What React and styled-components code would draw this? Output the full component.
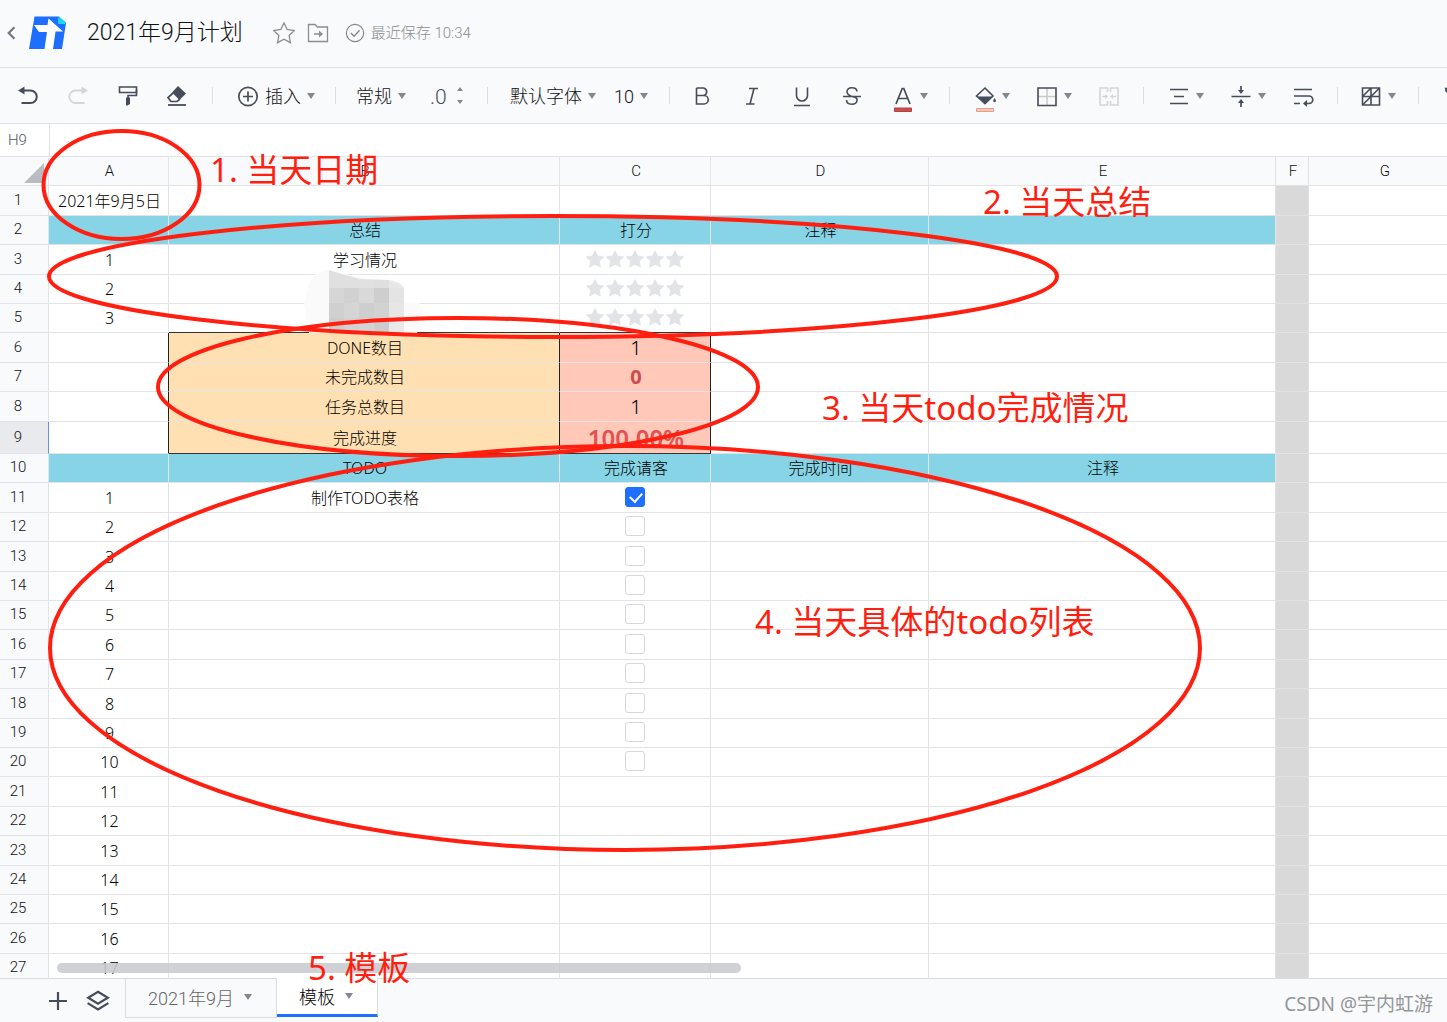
import React, { useState } from 'react'
import styled, { createGlobalStyle, css } from 'styled-components'

const UI_FONT = `Roboto, 'Noto Sans CJK SC', sans-serif`
const CELL_FONT = `'Noto Sans', 'Noto Sans CJK SC', sans-serif`

const INK = '#464d5a'
const LINE = '#e1e3e6'
const PANEL = '#f9fafc'
const RED = '#ff1f10'

const GlobalStyle = createGlobalStyle`
  * {
    box-sizing: border-box;
  }

  body {
    margin: 0;
    overflow: hidden;
    font-family: ${UI_FONT};
    font-weight: 300;
    color: #222;
    background: #fff;
  }

  button,
  input {
    margin: 0;
    padding: 0;
    font: inherit;
    color: inherit;
  }

  svg {
    display: block;
  }
`

// ────────────────────────────────────────────────────────────────────────────────
// 1) Page frame
// ────────────────────────────────────────────────────────────────────────────────
const Page = styled.div`
  position: relative;
  display: flex;
  flex-direction: column;
  height: 100vh;
  overflow: hidden;
`

const TitleBar = styled.header`
  flex: none;
  display: flex;
  align-items: center;
  height: 68px;
  padding: 0 3px 2px;
  background: ${PANEL};
  border-bottom: 1px solid ${LINE};
`

const BackButton = styled.button`
  display: flex;
  border: 0;
  background: none;
  color: #747982;
  cursor: pointer;
`

const Logo = styled.a`
  display: flex;
  margin: 0 20px 0 7px;
`

const Title = styled.h1`
  margin: 0 30px 0 0;
  font-size: 23px;
  font-weight: 300;
  line-height: 32px;
  color: #111;
`

const TitleIcon = styled.button`
  display: flex;
  margin-right: 12px;
  border: 0;
  background: none;
  color: #8a8d94;
  cursor: pointer;
`

const SaveState = styled.span`
  display: flex;
  align-items: center;
  gap: 6px;
  margin-left: 4px;
  color: #85888f;
`

const SaveText = styled.span`
  padding-bottom: 2px;
  font-size: 15px;
  color: #8c8c8c;
`

// ────────────────────────────────────────────────────────────────────────────────
// 2) Toolbar
// ────────────────────────────────────────────────────────────────────────────────
const Toolbar = styled.div`
  flex: none;
  display: flex;
  align-items: center;
  height: 56px;
  padding-left: 16px;
  overflow: hidden;
  background: ${PANEL};
  border-bottom: 1px solid ${LINE};

  svg {
    overflow: visible;
  }
`

const Tool = styled.button`
  flex: none;
  display: flex;
  align-items: center;
  justify-content: ${({ $pad }) => ($pad ? 'flex-start' : 'center')};
  gap: 6px;
  width: ${({ $width }) => $width || 50}px;
  height: 32px;
  padding-left: ${({ $pad }) => $pad || 0}px;
  border: 0;
  background: none;
  color: ${({ disabled }) => (disabled ? '#d3d5d9' : INK)};
  font-size: 18px;
  line-height: 32px;
  white-space: nowrap;
  cursor: pointer;
`

const ToolLabel = styled.span`
  padding-top: 2px;
  color: #111;
`

const Decimals = styled.span`
  margin-right: 4px;
  padding-top: 2px;
  font-size: 21px;
`

const Divider = styled.span`
  flex: none;
  width: 1px;
  height: 17px;
  margin-right: ${({ $after }) => $after || 0}px;
  background: #dcdee2;
`

const Caret = styled.span`
  flex: none;
  border: 4px solid transparent;
  border-top: 6px solid #83878f;
  border-bottom: 0;
`

const Stepper = styled.span`
  display: flex;
  flex-direction: column;
  gap: 9px;

  &::before,
  &::after {
    content: '';
    border: 3px solid transparent;
  }
  &::before {
    border-top: 0;
    border-bottom: 4px solid #83878f;
  }
  &::after {
    border-bottom: 0;
    border-top: 4px solid #83878f;
  }
`

// ────────────────────────────────────────────────────────────────────────────────
// 3) Name box and grid
// ────────────────────────────────────────────────────────────────────────────────
const FormulaBar = styled.div`
  flex: none;
  display: flex;
  height: 32px;
`

const NameBox = styled.input`
  width: 50px;
  padding-left: 8px;
  border: 0;
  border-right: 1px solid ${LINE};
  outline: 0;
  font-size: 15px;
  color: #555;
`

const FormulaInput = styled.input`
  flex: 1;
  border: 0;
  outline: 0;
`

const Sheet = styled.main`
  position: relative;
  flex: 1;
  min-height: 0;
  overflow: hidden;
`

const Grid = styled.table`
  width: max(100%, 1460px);
  table-layout: fixed;
  border-collapse: separate;
  border-spacing: 0;

  thead tr {
    height: 30px;
  }
  tbody tr {
    height: 29px;
  }
  tbody tr:nth-child(5n + 1),
  tbody tr:nth-child(5n + 3) {
    height: 30px;
  }
  tbody tr:nth-child(9) {
    height: 32px;
  }
`

const Col = styled.col`
  width: ${({ $width }) => ($width ? `${$width}px` : 'auto')};
`

const headCell = css`
  padding: 0 0 0 2px;
  background: ${PANEL};
  border-right: 1px solid ${LINE};
  border-bottom: 1px solid ${LINE};
  font-size: 15px;
  font-weight: 300;
  line-height: 18px;
  color: #111;
`

const ColumnHead = styled.th`
  ${headCell}
  border-top: 1px solid ${LINE};
`

const Corner = styled(ColumnHead)`
  svg {
    margin: 4px 4px 0 auto;
  }
`

const RowHead = styled.th`
  ${headCell}
  padding: 0 12px 2px 0;
  ${({ $active }) =>
    $active &&
    css`
      background: #e8eaed;
      border-right-color: #5c94f8;
    `}
`

const FILLS = {
  blue: '#86d4e5',
  orange: '#ffe0b2',
  pink: '#ffc8b9',
  gray: '#d9d9d9',
}

const Cell = styled.td`
  padding: 0 0 0 2px;
  background: ${({ $fill }) => FILLS[$fill] || '#fff'};
  border-right: 1px solid ${({ $edgeRight }) => ($edgeRight ? '#222' : LINE)};
  border-bottom: 1px solid ${({ $edgeBottom }) => ($edgeBottom ? '#333' : LINE)};
  font-family: ${CELL_FONT};
  font-size: 16px;
  line-height: 24px;
  text-align: center;
  color: #000;
`

const Count = styled.span`
  display: block;
  font-size: 20px;
  line-height: 28px;
`

const Alert = styled(Count)`
  font-weight: 700;
  color: #cb4d4f;
`

const Percent = styled(Count)`
  font-size: 24px;
  font-weight: 600;
  color: #e4504f;
`

const Stars = styled.span`
  display: flex;
  justify-content: center;
  padding: 0 2px 2px 0;
`

const StarButton = styled.button`
  display: flex;
  justify-content: center;
  width: 20px;
  border: 0;
  background: none;
  color: #e1e3e6;
  cursor: pointer;
`

const CheckBox = styled.span`
  display: flex;
  justify-content: center;
  padding: 0 2px 2px 0;
`

const Check = styled.input`
  appearance: none;
  position: relative;
  width: 20px;
  height: 20px;
  border: 1px solid #d5d7da;
  border-radius: 3px;
  background: #fff;

  &:checked {
    border-color: #1e6fff;
    background: #1e6fff;
  }
  &:checked::after {
    content: '';
    position: absolute;
    left: 6px;
    top: 2px;
    width: 6px;
    height: 10px;
    border: solid #fff;
    border-width: 0 2px 2px 0;
    transform: rotate(42deg);
  }
`

const ScrollThumb = styled.div`
  position: absolute;
  left: 57px;
  bottom: 5px;
  width: 684px;
  height: 10px;
  border-radius: 5px;
  background: rgba(202, 203, 208, 0.88);
`

// ────────────────────────────────────────────────────────────────────────────────
// 4) Sheet tabs
// ────────────────────────────────────────────────────────────────────────────────
const TabBar = styled.footer`
  flex: none;
  display: flex;
  align-items: flex-start;
  height: 44px;
  background: ${PANEL};
  border-top: 1px solid #d9dce0;
`

const TabTools = styled.div`
  display: flex;
  align-items: center;
  gap: 17px;
  width: 125px;
  height: 44px;
  padding-left: 47px;
`

const TabTool = styled.button`
  display: flex;
  border: 0;
  background: none;
  color: ${INK};
  cursor: pointer;
`

const Tab = styled.button`
  display: flex;
  align-items: center;
  gap: 10px;
  height: 39px;
  padding: 0 24px 2px 22px;
  border: 1px solid #d9dce0;
  border-top: 0;
  background: ${PANEL};
  font-size: 18px;
  color: #666;
  cursor: pointer;

  ${({ $active }) =>
    $active &&
    css`
      margin-top: -1px;
      padding-bottom: 0;
      border-left: 0;
      border-bottom: 3px solid #1e6fff;
      background: #fff;
      color: #000;
    `}
`

// ────────────────────────────────────────────────────────────────────────────────
// 5) Hand-drawn notes over the sheet
// ────────────────────────────────────────────────────────────────────────────────
const Markup = styled.svg`
  position: absolute;
  left: 0;
  top: 0;
  pointer-events: none;
`

const Note = styled.span`
  position: absolute;
  left: ${({ $x }) => $x}px;
  top: ${({ $y }) => $y}px;
  font-family: ${CELL_FONT};
  font-size: 33px;
  font-weight: 400;
  line-height: 40px;
  white-space: nowrap;
  color: ${RED};
  pointer-events: none;
`

const Watermark = styled.span`
  position: absolute;
  right: 14px;
  bottom: 4px;
  font-family: ${CELL_FONT};
  font-size: 19px;
  font-weight: 400;
  line-height: 28px;
  color: #95979a;
`

// ────────────────────────────────────────────────────────────────────────────────
// Icons
// ────────────────────────────────────────────────────────────────────────────────
const Icon = ({ size = 22, children }) => (
  <svg
    width={size}
    height={size}
    viewBox="0 0 22 22"
    fill="none"
    stroke="currentColor"
    strokeWidth="1.6"
    aria-hidden="true"
  >
    {children}
  </svg>
)

const LogoIcon = () => (
  <svg width="39" height="34" viewBox="0 0 39 34" aria-hidden="true">
    <path d="M6.500 0.500H31L38 7L34 33H1Z" fill="#1e6fff" />
    <path d="M30.500 0.500L38 6.500L37.500 8H31.500Q29.500 8 30 5.500Z" fill="#15d8f2" />
    <path d="M20.500 2.500L35 15.500H27.500L25 33H16.500L19 16H11L6 9H19.500Z" fill="#fff" />
  </svg>
)

const STAR = 'M11 1.800L13.900 7.800L20.500 8.700L15.700 13.300L16.900 19.900L11 16.700L5.100 19.900L6.300 13.300L1.500 8.700L8.100 7.800Z'

const icons = {
  back: <path d="M14 4L7 11L14 18" strokeWidth="2.800" />,
  star: <path d={STAR} transform="translate(-1 -1) scale(1.09)" strokeWidth="1.200" />,
  folder: (
    <>
      <path d="M1.500 2.500H8L10.500 5H20.500V19.500H1.500Z" strokeWidth="1.300" />
      <path d="M7 12H14" strokeWidth="1.500" />
      <path d="M12 8.500L16 12L12 15.500Z" fill="currentColor" stroke="none" />
    </>
  ),
  saved: (
    <>
      <circle cx="11" cy="11" r="9.500" strokeWidth="1.300" />
      <path d="M6.500 11L10 14.500L16 8" strokeWidth="1.500" />
    </>
  ),
  undo: (
    <>
      <path d="M4 5.500H13.500A6 6 0 0 1 13.500 18H4.500" strokeWidth="2" />
      <path d="M1 5.500L7.500 1.500V9.500Z" fill="currentColor" stroke="none" />
    </>
  ),
  redo: (
    <>
      <path d="M18 5.500H8.500A6 6 0 0 0 8.500 18H17.500" strokeWidth="1.800" />
      <path d="M21 5.500L14.500 1.500V9.500Z" fill="currentColor" stroke="none" />
    </>
  ),
  painter: (
    <>
      <path d="M2.500 2H19.500V7.500H2.500Z" />
      <path d="M19.500 4.500V10.500H11V13" />
      <path d="M9 12.500H13V19L10.500 20.500H9Z" fill="currentColor" stroke="none" />
    </>
  ),
  eraser: (
    <>
      <path d="M13 1L21 8.500L14.500 15L7 7.500Z" fill="currentColor" stroke="none" />
      <path d="M8 8L3 12.500L6 16.500H12L15 14" strokeWidth="1.700" />
      <path d="M3 20H21" strokeWidth="1.800" />
    </>
  ),
  plusCircle: (
    <>
      <circle cx="11" cy="11.500" r="9.200" strokeWidth="1.700" />
      <path d="M11 6.500V16.500M6 11.500H16" strokeWidth="1.700" />
    </>
  ),
  bold: <path d="M5.500 3H12.500A3.800 3.800 0 0 1 12.500 10.500H5.500M12.500 10.500H13A4.200 4.200 0 0 1 13 19H5.500V3" strokeWidth="1.600" />,
  italic: <path d="M8 3.500H17M5 19H13.500M13 3.500L9 19" strokeWidth="1.600" />,
  underline: <path d="M5.500 2.500V10.500A5.500 5.500 0 0 0 16.500 10.500V2.500M3 20.500H19" strokeWidth="1.600" />,
  strike: (
    <path
      d="M16 6.500C15.500 1.500 5.500 1.500 6 7C6.200 9.500 9 10.800 11 11.500M11 11.500C14.500 12 16.500 13 16 15.500C15.500 20.500 5.500 20.500 5.500 15M2 11.500H20"
      strokeWidth="1.600"
    />
  ),
  fontColor: (
    <>
      <path d="M4 19L10.200 3.500H11.800L18 19M6.500 13.500H15.500" strokeWidth="1.700" />
      <path d="M2.500 23H19.500V26.500H2.500Z" fill="#c9504f" stroke="#b44545" strokeWidth="1" />
    </>
  ),
  fill: (
    <>
      <path d="M11 3L19 11L11 18.500L2.500 11Z" />
      <path d="M3 11.500H19L11 19.500Z" fill="currentColor" stroke="none" />
      <path d="M20.500 13Q23.500 17 20.500 17.200Q17.800 17 20.500 13Z" fill="currentColor" stroke="none" />
      <path d="M2.500 23.500H19.500V26.500H2.500Z" fill="#fcc5b5" stroke="#dda292" strokeWidth="1" />
    </>
  ),
  borders: (
    <>
      <path d="M11 3V20M2 11.500H20" stroke="#c7c9cd" strokeWidth="1.500" />
      <path d="M2 3H20V20.500H2Z" strokeWidth="1.600" />
    </>
  ),
  merge: (
    <>
      <path d="M9.500 7V3H2V20H9.500V16M12.500 7V3H20V20H12.500V16" />
      <path d="M4 11.500H8M18 11.500H14" />
      <path d="M7 9L10 11.500L7 14ZM15 9L12 11.500L15 14Z" fill="currentColor" stroke="none" />
    </>
  ),
  align: <path d="M2 4.500H20M6 11.500H16M2 18.500H20" strokeWidth="1.700" />,
  valign: (
    <>
      <path d="M1.500 11.500H20.500M11 1V6M11 22V17" strokeWidth="1.700" />
      <path d="M8 5H14L11 9ZM8 18H14L11 14Z" fill="currentColor" stroke="none" />
    </>
  ),
  wrap: (
    <>
      <path d="M2 4.500H20M2 11H17A3.600 3.600 0 0 1 17 18.500H14M2 18.500H8" strokeWidth="1.700" />
      <path d="M11 18.500L15 15V22Z" fill="currentColor" stroke="none" />
    </>
  ),
  format: <path d="M2.500 3H19.500V20H2.500ZM11 3V20M2.500 11.500H19.500M2.500 20L19.500 3M2.500 11.500L11 3" />,
  filter: <path d="M3 3.500H20L13 11.500V19.500L10 18V11.500ZM3 3.500V6L10 12" />,
  plus: <path d="M11 2V20M2 11H20" strokeWidth="2.200" />,
  layers: <path d="M11 2.500L20 8L11 13.500L2 8ZM1.500 13L11 18.800L20.500 13" strokeWidth="2" />,
}

// ────────────────────────────────────────────────────────────────────────────────
// Sheet data
// ────────────────────────────────────────────────────────────────────────────────
const columns = [
  { name: 'A', width: 120 },
  { name: 'B', width: 391 },
  { name: 'C', width: 151 },
  { name: 'D', width: 218 },
  { name: 'E', width: 347 },
  { name: 'F', width: 33 },
  { name: 'G' },
]

const summary = {
  1: { A: '2021年9月5日' },
  2: { B: '总结', C: '打分', D: '注释' },
  3: { A: '1', B: '学习情况' },
  4: { A: '2' },
  5: { A: '3' },
  6: { B: 'DONE数目', C: <Count>1</Count> },
  7: { B: '未完成数目', C: <Alert>0</Alert> },
  8: { B: '任务总数目', C: <Count>1</Count> },
  9: { B: '完成进度', C: <Percent>100.00%</Percent> },
  10: { B: 'TODO', C: '完成请客', D: '完成时间', E: '注释' },
  11: { B: '制作TODO表格' },
}

const rows = Array.from({ length: 27 }, (_, i) => i + 1)

const inBox = (row) => row >= 6 && row <= 9

const fillOf = (row, col) => {
  if (col === 'F') return 'gray'
  if (col === 'G') return undefined
  if (row === 2 || row === 10) return 'blue'
  if (inBox(row) && col === 'B') return 'orange'
  if (inBox(row) && col === 'C') return 'pink'
  return undefined
}

// Blurred-out patch in rows 4 and 5: [x, y, grey] of each 15px tile
const tiles = [
  [329, 270, '#e0e0e0'], [344, 270, '#e0e0e0'], [359, 270, '#e1e1e1'], [374, 270, '#dfdfdf'], [389, 270, '#e8e8e8'],
  [329, 288, '#d6d6d6'], [344, 288, '#d1d1d1'], [359, 288, '#d9d9d9'], [374, 288, '#cecece'], [389, 288, '#e4e4e4'],
  [329, 303, '#d0d0d0'], [344, 303, '#d5d5d5'], [359, 303, '#cecece'], [374, 303, '#d2d2d2'], [389, 303, '#e6e6e6'],
  [329, 318, '#cbcbcb'], [344, 318, '#d0d0d0'], [359, 318, '#d3d3d3'], [374, 318, '#cccccc'], [389, 318, '#e9e9e9'],
]

function Rating({ row }) {
  return (
    <Stars>
      {[1, 2, 3, 4, 5].map((n) => (
        <StarButton key={n} type="button" aria-label={`第${row}行 ${n}星`}>
          <svg width="20" height="20" viewBox="0 0 22 22" fill="currentColor" stroke="currentColor" aria-hidden="true">
            <path d={STAR} />
          </svg>
        </StarButton>
      ))}
    </Stars>
  )
}

function Todo({ row, initial }) {
  const [done, setDone] = useState(initial)
  return (
    <CheckBox>
      <Check
        type="checkbox"
        aria-label={`第${row}行 完成`}
        checked={done}
        onChange={(e) => setDone(e.target.checked)}
      />
    </CheckBox>
  )
}

function cellContent(row, col) {
  if (summary[row] && summary[row][col]) return summary[row][col]
  if (col === 'A' && row > 10) return row - 10
  if (col === 'C' && row >= 3 && row <= 5) return <Rating row={row} />
  if (col === 'C' && row >= 11 && row <= 20) return <Todo row={row} initial={row === 11} />
  return null
}

function SheetGrid() {
  return (
    <Grid>
      <colgroup>
        <Col $width={49} />
        {columns.map((c) => (
          <Col key={c.name} $width={c.width} />
        ))}
      </colgroup>
      <thead>
        <tr>
          <Corner aria-label="全选">
            <svg width="20" height="20" viewBox="0 0 20 20" aria-hidden="true">
              <path d="M20 0V20H0Z" fill="#b9bcc1" />
            </svg>
          </Corner>
          {columns.map((c) => (
            <ColumnHead key={c.name} scope="col">
              {c.name}
            </ColumnHead>
          ))}
        </tr>
      </thead>
      <tbody>
        {rows.map((row) => (
          <tr key={row}>
            <RowHead scope="row" $active={row === 9}>
              {row}
            </RowHead>
            {columns.map(({ name }) => (
              <Cell
                key={name}
                $fill={fillOf(row, name)}
                $edgeRight={inBox(row) && 'ABC'.includes(name)}
                $edgeBottom={(row === 5 || row === 9) && 'BC'.includes(name)}
              >
                {cellContent(row, name)}
              </Cell>
            ))}
          </tr>
        ))}
      </tbody>
    </Grid>
  )
}

function Tools() {
  return (
    <Toolbar role="toolbar">
      <Tool $width={24} aria-label="撤销"><Icon>{icons.undo}</Icon></Tool>
      <Tool $width={76} aria-label="重做" disabled><Icon>{icons.redo}</Icon></Tool>
      <Tool $width={24} aria-label="格式刷"><Icon>{icons.painter}</Icon></Tool>
      <Tool $width={72} aria-label="清除格式"><Icon>{icons.eraser}</Icon></Tool>
      <Divider />
      <Tool $pad={24} $width={122}>
        <Icon>{icons.plusCircle}</Icon>
        <ToolLabel>插入</ToolLabel>
        <Caret />
      </Tool>
      <Divider />
      <Tool $pad={20} $width={84}>
        <ToolLabel>常规</ToolLabel>
        <Caret />
      </Tool>
      <Tool $pad={10} $width={67} aria-label="小数位数">
        <Decimals>.0</Decimals>
        <Stepper />
      </Tool>
      <Divider />
      <Tool $pad={22} $width={102}>
        <ToolLabel>默认字体</ToolLabel>
        <Caret />
      </Tool>
      <Tool $pad={24} $width={79}>
        <ToolLabel>10</ToolLabel>
        <Caret />
      </Tool>
      <Divider $after={7} />
      <Tool aria-label="加粗"><Icon>{icons.bold}</Icon></Tool>
      <Tool aria-label="斜体"><Icon>{icons.italic}</Icon></Tool>
      <Tool aria-label="下划线"><Icon>{icons.underline}</Icon></Tool>
      <Tool aria-label="删除线"><Icon>{icons.strike}</Icon></Tool>
      <Tool $pad={15} $width={72} aria-label="字体颜色"><Icon>{icons.fontColor}</Icon><Caret /></Tool>
      <Divider />
      <Tool $pad={24} $width={62} aria-label="填充颜色"><Icon>{icons.fill}</Icon><Caret /></Tool>
      <Tool $pad={24} $width={62} aria-label="边框"><Icon>{icons.borders}</Icon><Caret /></Tool>
      <Tool $pad={24} $width={69} aria-label="合并单元格" disabled><Icon>{icons.merge}</Icon></Tool>
      <Divider />
      <Tool $pad={24} $width={62} aria-label="水平对齐"><Icon>{icons.align}</Icon><Caret /></Tool>
      <Tool $pad={24} $width={62} aria-label="垂直对齐"><Icon>{icons.valign}</Icon><Caret /></Tool>
      <Tool $pad={24} $width={69} aria-label="自动换行"><Icon>{icons.wrap}</Icon></Tool>
      <Divider />
      <Tool $pad={22} $width={80} aria-label="条件格式"><Icon>{icons.format}</Icon><Caret /></Tool>
      <Divider />
      <Tool $pad={24} aria-label="筛选"><Icon>{icons.filter}</Icon></Tool>
    </Toolbar>
  )
}

export default function App() {
  return (
    <Page>
      <GlobalStyle />

      <TitleBar>
        <BackButton aria-label="返回"><Icon size={18}>{icons.back}</Icon></BackButton>
        <Logo href="#" aria-label="首页"><LogoIcon /></Logo>
        <Title>2021年9月计划</Title>
        <TitleIcon aria-label="收藏"><Icon>{icons.star}</Icon></TitleIcon>
        <TitleIcon aria-label="移动到"><Icon>{icons.folder}</Icon></TitleIcon>
        <SaveState>
          <Icon size={20}>{icons.saved}</Icon>
          <SaveText>最近保存 10:34</SaveText>
        </SaveState>
      </TitleBar>

      <Tools />

      <FormulaBar>
        <NameBox aria-label="单元格" defaultValue="H9" />
        <FormulaInput aria-label="公式" />
      </FormulaBar>

      <Sheet>
        <SheetGrid />
        <ScrollThumb />
      </Sheet>

      <TabBar>
        <TabTools>
          <TabTool aria-label="新建工作表"><Icon>{icons.plus}</Icon></TabTool>
          <TabTool aria-label="全部工作表"><Icon size={24}>{icons.layers}</Icon></TabTool>
        </TabTools>
        <Tab>2021年9月<Caret /></Tab>
        <Tab $active>模板<Caret /></Tab>
      </TabBar>

      <Markup width="1447" height="1022" fill="none" aria-hidden="true">
        <clipPath id="patch">
          <path d="M329 270L345 275L360 279L390 280L399 283L404 288V333H329Z" />
        </clipPath>
        <path d="M304 303L309 283L316 273L329 270L362 278L404 283V303H420L425 320L417 333H309Z" fill="#fafafa" />
        <g clipPath="url(#patch)">
          {tiles.map(([x, y, grey]) => (
            <rect key={`${x}-${y}`} x={x} y={y} width="15" height="18" fill={grey} />
          ))}
        </g>
        <g stroke={RED} strokeWidth="4">
          <ellipse cx="121.500" cy="185" rx="78" ry="54" />
          <ellipse cx="553" cy="276.500" rx="504" ry="60.500" />
          <ellipse cx="458" cy="387" rx="300" ry="69" />
          <ellipse cx="625" cy="648" rx="575" ry="202" />
        </g>
      </Markup>
      <Note $x={210} $y={150}>1. 当天日期</Note>
      <Note $x={983} $y={182}>2. 当天总结</Note>
      <Note $x={822} $y={388}>3. 当天todo完成情况</Note>
      <Note $x={755} $y={602}>4. 当天具体的todo列表</Note>
      <Note $x={308} $y={948}>5. 模板</Note>
      <Watermark>CSDN @宇内虹游</Watermark>
    </Page>
  )
}
